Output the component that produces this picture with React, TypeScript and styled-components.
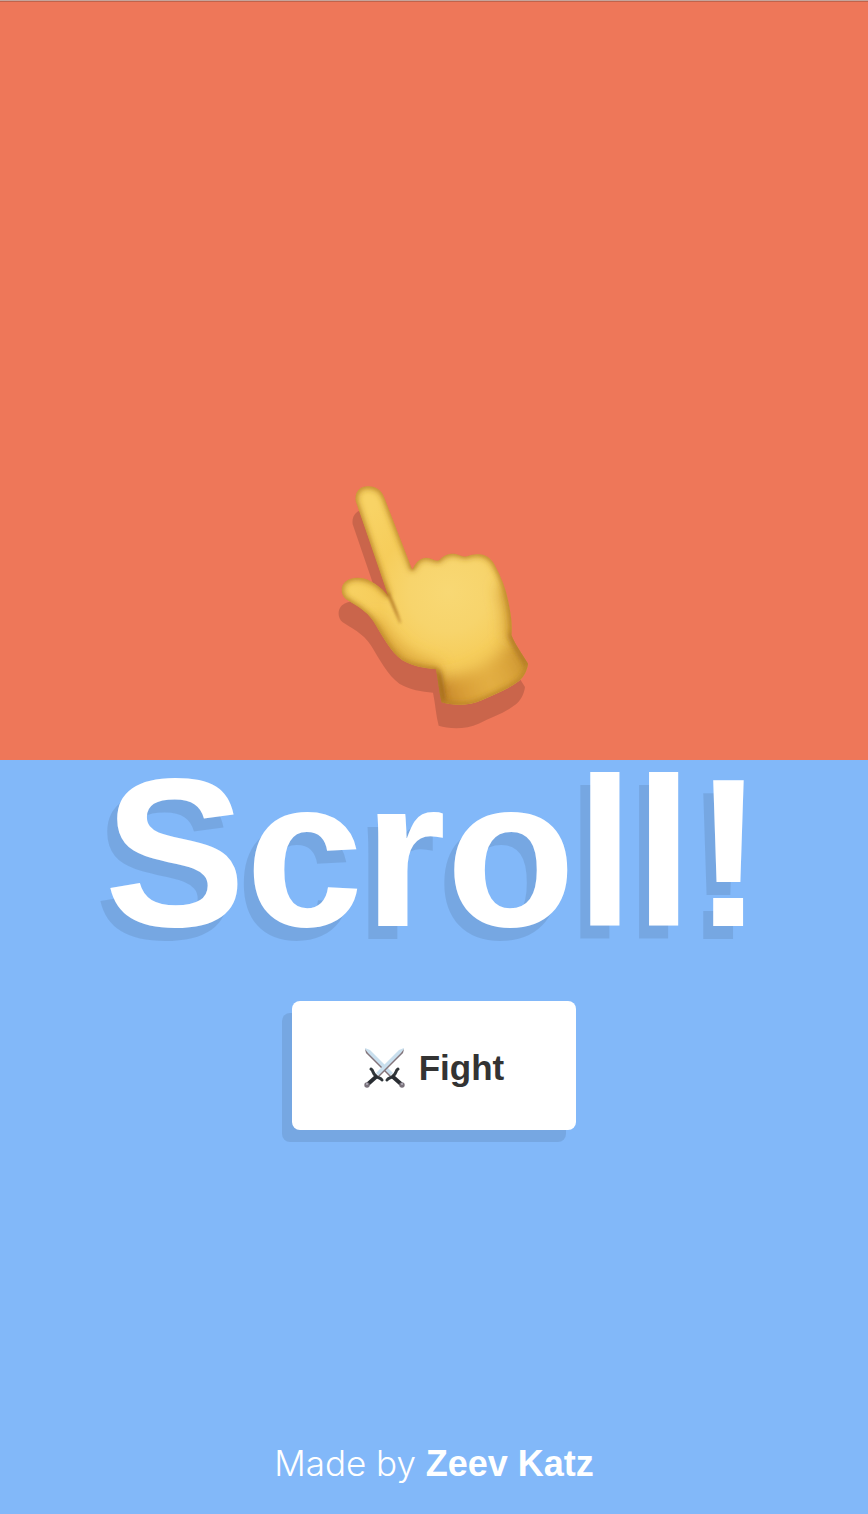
import React from "react";
import styled, { createGlobalStyle } from "styled-components";

const GlobalStyle = createGlobalStyle`
  * { box-sizing: border-box; }
  body {
    margin: 0;
    background: #82b8f9;
    font-family: "Liberation Sans", Helvetica, Arial, sans-serif;
  }
`;

const Page = styled.main`
  display: flex;
  flex-direction: column;
  min-height: 100vh;
`;

const HandPanel = styled.section`
  display: flex;
  justify-content: center;
  align-items: flex-end;
  min-height: calc(50vh + 3px);
  padding-bottom: 20px;
  background: #ee7759;
  border-top: 1px solid #c5a49b;
  box-shadow: inset 0 1px #c1634b;
`;

const TitlePanel = styled.section`
  flex: 1;
  display: flex;
  flex-direction: column;
  align-items: center;
  padding: 8px 0 24px;
  background: #82b8f9;
`;

const Title = styled.h1`
  margin: 0 0 63px;
  color: #fff;
  font-size: 212px;
  line-height: 170px;
  font-weight: 700;
  text-shadow: -10px 13px 0 rgba(0, 0, 0, 0.09);
`;

const FightButton = styled.button`
  display: flex;
  align-items: center;
  gap: 14px;
  padding: 46px 72px 42px;
  border: 0;
  border-radius: 8px;
  background: #fff;
  box-shadow: -10px 12px 0 rgba(0, 0, 0, 0.09);
  color: #333;
  font: inherit;
  font-size: 35px;
  line-height: 41px;
  font-weight: 700;
  cursor: pointer;
`;

const Credit = styled.footer`
  margin-top: auto;
  color: #fff;
  font-family: Inter, sans-serif;
  font-size: 35px;
  line-height: 52px;
  font-weight: 300;
`;

const AuthorLink = styled.a`
  color: inherit;
  font-family: "Liberation Sans", Helvetica, Arial, sans-serif;
  font-size: 36px;
  font-weight: 700;
  text-decoration: none;
`;

const HandDrawing = styled.svg`
  display: block;
  width: 220px;
  height: 265px;
  overflow: visible;
`;

const SwordsDrawing = styled.svg`
  display: block;
  width: 41px;
  height: 41px;
`;

const PALM =
  "M92 78C88 50 106 33 130 34C154 34 170 46 178 68L260 280Q262 286 266 276C274 260 288 248 304 248C320 248 330 260 342 256C354 243 366 236 384 236C402 236 412 247 426 244C438 239 448 237 462 238C482 239 498 250 508 268C528 304 542 340 550 380C558 420 562 445 559 480C572 512 592 538 609 566C606 588 596 606 582 618C548 644 510 656 470 676C432 694 380 692 350 682C342 652 340 616 333 583C300 580 262 574 232 556C196 530 172 482 146 440C124 406 86 388 62 372C46 358 46 334 60 321C80 304 112 306 136 318C158 330 174 342 190 364Z";

function Hand() {
  const area = { filterUnits: "userSpaceOnUse" as const, x: -60, y: -60, width: 780, height: 900 };
  return (
    <HandDrawing viewBox="-3 0 660 795" role="img" aria-label="Pointing hand">
      <defs>
        <radialGradient id="skin" gradientUnits="userSpaceOnUse" cx="370" cy="350" r="340">
          <stop offset="0" stopColor="#f8d874" />
          <stop offset="0.35" stopColor="#f7d46c" />
          <stop offset="0.62" stopColor="#f6cd5b" />
          <stop offset="1" stopColor="#f8d365" />
        </radialGradient>
        <linearGradient id="cuff" gradientUnits="userSpaceOnUse" x1="340" y1="650" x2="600" y2="550">
          <stop offset="0" stopColor="#c08029" />
          <stop offset="0.2" stopColor="#d79b34" />
          <stop offset="0.55" stopColor="#e4b044" />
          <stop offset="0.85" stopColor="#d9a238" />
          <stop offset="1" stopColor="#c58e30" />
        </linearGradient>
        <clipPath id="palmClip"><path d={PALM} /></clipPath>
        <filter id="soft" {...area}><feGaussianBlur stdDeviation="9" /></filter>
        <filter id="softer" {...area}><feGaussianBlur stdDeviation="22" /></filter>
        <filter id="fine" {...area}><feGaussianBlur stdDeviation="4" /></filter>
      </defs>
      <path d={PALM} fill="#000" opacity="0.15" transform="translate(-9 70)" />
      <g clipPath="url(#palmClip)">
        <path d={PALM} fill="url(#skin)" />
        <path d="M320 600C390 620 510 570 562 480L660 580L520 740L320 740Z" fill="url(#cuff)" filter="url(#softer)" />
        <path d="M140 440C190 520 240 570 340 590" fill="none" stroke="#dba53a" strokeWidth="44" filter="url(#softer)" />
        <path d="M540 330C562 390 568 440 560 490" fill="none" stroke="#d09a35" strokeWidth="44" filter="url(#softer)" />
        <path d="M332 590C342 620 342 650 346 690" fill="none" stroke="#8f5519" strokeWidth="24" filter="url(#soft)" />
        <path d="M560 474C572 510 595 540 612 570" fill="none" stroke="#a56b20" strokeWidth="18" filter="url(#soft)" />
        <path d={PALM} fill="none" stroke="#b88024" strokeWidth="11" filter="url(#soft)" />
        <path d={PALM} fill="none" stroke="#bd852a" strokeWidth="5" filter="url(#fine)" />
      </g>
      <path d="M186 356C200 384 210 412 226 444C220 420 208 388 192 354Z" fill="#b57c26" stroke="#b57c26" strokeWidth="3" filter="url(#fine)" />
    </HandDrawing>
  );
}

function Sword() {
  return (
    <>
      <path d="M1 1L6 3L29 26L26 29L2 6Z" fill="#c9dfee" />
      <path d="M1 2L2 6L26 30L27 29L4 6Z" fill="#85757a" />
      <path d="M34 22C31 24 33 26 29 29C26 32 25 30 23 33" fill="none" stroke="#30363a" strokeWidth="3" strokeLinecap="round" />
      <path d="M28 29L37 37" stroke="#292d32" strokeWidth="4" />
      <circle cx="38" cy="38" r="2.7" fill="#79717b" />
      <circle cx="38" cy="37" r="1" fill="#b5b2bd" />
    </>
  );
}

function Swords() {
  return (
    <SwordsDrawing viewBox="0 0 41 41" aria-hidden="true">
      <Sword />
      <g transform="translate(41 0) scale(-1 1)"><Sword /></g>
    </SwordsDrawing>
  );
}

export default function App() {
  return (
    <>
      <GlobalStyle />
      <Page>
        <HandPanel><Hand /></HandPanel>
        <TitlePanel>
          <Title>Scroll!</Title>
          <FightButton type="button"><Swords />Fight</FightButton>
          <Credit>Made by <AuthorLink href="#author">Zeev Katz</AuthorLink></Credit>
        </TitlePanel>
      </Page>
    </>
  );
}
